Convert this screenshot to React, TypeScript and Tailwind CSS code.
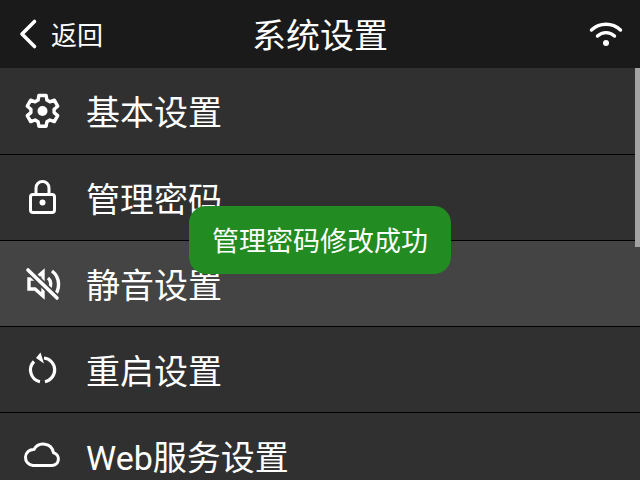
import React from 'react';

const GearIcon = () => (
  <svg width="44" height="44" viewBox="0 0 44 44" fill="none" stroke="white" strokeWidth="3.4" strokeLinejoin="round">
    <path d="M19.4 6.5h7.2l.8 4.6 3 1.7 4.4-1.6 3.4 6-3.6 3v3.4l3.6 3-3.4 6-4.4-1.6-3 1.7-.8 4.6h-7.2l-.8-4.6-3-1.7-4.4 1.6-3.4-6 3.6-3v-3.4l-3.6-3 3.4-6 4.4 1.6 3-1.7z" transform="translate(-0.5 0)" />
    <circle cx="22.5" cy="22" r="5" fill="white" stroke="none" />
  </svg>
);

const LockIcon = () => (
  <svg width="44" height="44" viewBox="0 0 44 44" fill="none" stroke="white" strokeWidth="3">
    <rect x="10.5" y="18.5" width="24" height="18" rx="2.5" />
    <path d="M16 18v-6a6.5 6.5 0 0 1 13 0v6" />
    <circle cx="22.5" cy="26.5" r="3" fill="white" stroke="none" />
  </svg>
);

const MuteIcon = () => (
  <svg width="44" height="44" viewBox="0 0 44 44" fill="none" stroke="white" strokeWidth="3.4">
    <path d="M9 17h6l8-7v24l-8-7H9z" />
    <path d="M28 16a8 8 0 0 1 1 11" />
    <path d="M32 9a17 17 0 0 1 1 26" />
    <path d="M8 8l29 28" stroke="#444444" strokeWidth="7" />
    <path d="M8 8l29 28" strokeLinecap="round" strokeWidth="3.6" />
  </svg>
);

const RestartIcon = () => (
  <svg width="44" height="44" viewBox="0 0 44 44" fill="none" stroke="white" strokeWidth="3.2">
    <path d="M24 10A12 12 0 0 1 25 33.7" />
    <path d="M20 33.7A12 12 0 0 1 14 13.5" />
    <path d="M20.5 4.5 16 10l8 5.5z" fill="white" stroke="none" />
  </svg>
);

const CloudIcon = () => (
  <svg width="44" height="44" viewBox="0 0 44 44" fill="none" stroke="white" strokeWidth="3" strokeLinejoin="round">
    <path d="M13 31.5h19a6.5 6.5 0 0 0 1.5-12.8A10.5 10.5 0 0 0 14 15.5a8 8 0 0 0-1 16z" />
  </svg>
);

const WifiIcon = () => (
  <svg width="36" height="36" viewBox="0 0 36 36" fill="none" stroke="white" strokeWidth="3.4" strokeLinecap="round">
    <path d="M3.5 14a21 21 0 0 1 29 0" />
    <path d="M9.5 20a12.5 12.5 0 0 1 17 0" />
    <circle cx="18" cy="27" r="3" fill="white" stroke="none" />
  </svg>
);

const rows = [
  { label: '基本设置', icon: <GearIcon />, active: false },
  { label: '管理密码', icon: <LockIcon />, active: false },
  { label: '静音设置', icon: <MuteIcon />, active: true },
  { label: '重启设置', icon: <RestartIcon />, active: false },
  { label: 'Web服务设置', icon: <CloudIcon />, active: false },
];

export default function App() {
  return (
    <div className="relative w-[640px] h-[480px] overflow-hidden bg-[#303030] text-white font-['Roboto','Noto_Sans_CJK_SC',sans-serif]">
      <div className="flex items-center h-[68px] bg-[#1a1a1a] relative">
        <div className="flex items-center pl-[16px] w-[200px]">
          <svg width="24" height="32" viewBox="0 0 24 32" fill="none" stroke="white" strokeWidth="3.6" strokeLinecap="round" strokeLinejoin="round">
            <path d="M18.5 3.5 6 16l12.5 12.5" />
          </svg>
          <span className="ml-[11px] mt-[4px] text-[26px] leading-none">返回</span>
        </div>
        <div className="flex-1 mt-[4px] text-center text-[34px] leading-none">系统设置</div>
        <div className="w-[200px] flex justify-end pr-[16px]">
          <WifiIcon />
        </div>
      </div>
      <div className="relative">
        {rows.map((row) => (
          <div
            key={row.label}
            className={`flex items-center h-[86px] first:h-[87px] pl-[20px] border-b border-black ${row.active ? 'bg-[#444444]' : 'bg-[#303030]'}`}
          >
            <div className="w-[44px] h-[44px] flex items-center justify-center">{row.icon}</div>
            <span className="ml-[22px] mt-[4px] text-[34px] leading-none">{row.label}</span>
          </div>
        ))}
        <div className="absolute top-0 right-0 w-[5px] h-[179px] bg-[#a3a3a3]" />
      </div>
      <div className="absolute left-[189px] top-[206px] w-[262px] h-[68px] pt-[5px] rounded-[17px] bg-[#228b22] flex items-center justify-center text-[27px] leading-none">
        管理密码修改成功
      </div>
    </div>
  );
}
